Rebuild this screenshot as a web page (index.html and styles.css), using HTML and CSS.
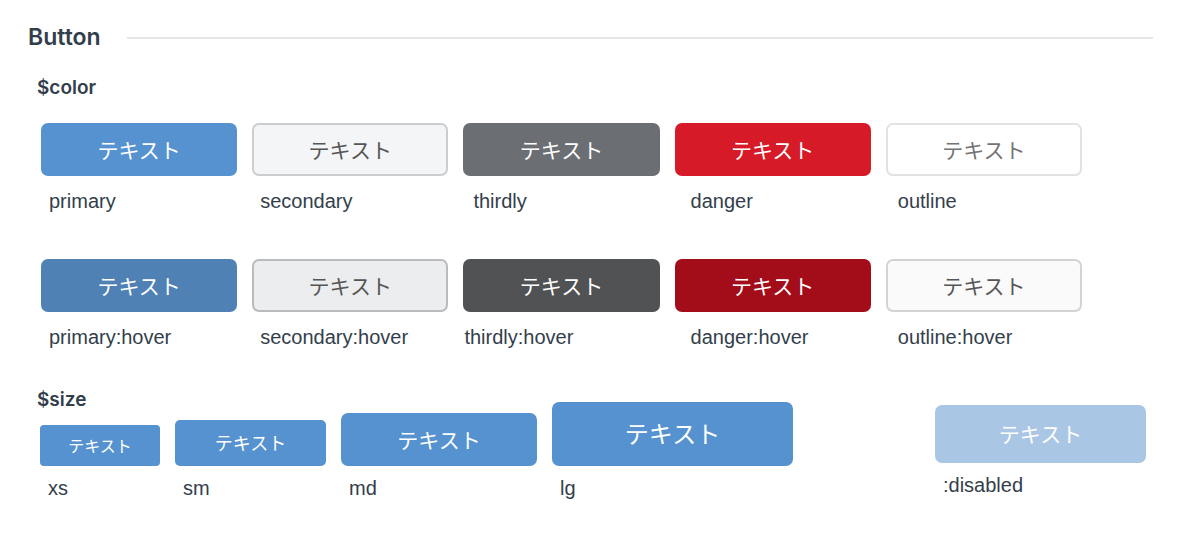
FILE: index.html
```html
<!DOCTYPE html>
<html lang="ja">
<head>
<meta charset="utf-8">
<meta name="viewport" content="width=device-width, initial-scale=1">
<title>Button</title>
<link rel="stylesheet" href="styles.css">
</head>
<body>
<main class="page">
  <header class="title-bar"><h1 class="title">Button</h1><hr class="rule"></header>
  <section class="colors">
    <h2 class="subtitle">$color</h2>
    <div class="grid">
      <div class="item"><button type="button" class="btn primary" aria-describedby="c1">テキスト</button><span class="label" id="c1">primary</span></div>
      <div class="item"><button type="button" class="btn secondary" aria-describedby="c2">テキスト</button><span class="label" id="c2">secondary</span></div>
      <div class="item"><button type="button" class="btn thirdly" aria-describedby="c3">テキスト</button><span class="label label-thirdly" id="c3">thirdly</span></div>
      <div class="item"><button type="button" class="btn danger" aria-describedby="c4">テキスト</button><span class="label label-wide" id="c4">danger</span></div>
      <div class="item"><button type="button" class="btn outline" aria-describedby="c5">テキスト</button><span class="label label-outline" id="c5">outline</span></div>
      <div class="item"><button type="button" class="btn primary-hover" aria-describedby="h1">テキスト</button><span class="label" id="h1">primary:hover</span></div>
      <div class="item"><button type="button" class="btn secondary-hover" aria-describedby="h2">テキスト</button><span class="label" id="h2">secondary:hover</span></div>
      <div class="item"><button type="button" class="btn thirdly-hover" aria-describedby="h3">テキスト</button><span class="label label-tight" id="h3">thirdly:hover</span></div>
      <div class="item"><button type="button" class="btn danger-hover" aria-describedby="h4">テキスト</button><span class="label label-wide" id="h4">danger:hover</span></div>
      <div class="item"><button type="button" class="btn outline-hover" aria-describedby="h5">テキスト</button><span class="label label-outline" id="h5">outline:hover</span></div>
    </div>
  </section>
  <section class="sizes">
    <h2 class="subtitle">$size</h2>
    <div class="size-row">
      <div class="size-group">
        <div class="item"><button type="button" class="btn primary xs" aria-describedby="s1">テキスト</button><span class="label" id="s1">xs</span></div>
        <div class="item"><button type="button" class="btn primary sm" aria-describedby="s2">テキスト</button><span class="label" id="s2">sm</span></div>
        <div class="item"><button type="button" class="btn primary md" aria-describedby="s3">テキスト</button><span class="label" id="s3">md</span></div>
        <div class="item"><button type="button" class="btn primary lg" aria-describedby="s4">テキスト</button><span class="label" id="s4">lg</span></div>
      </div>
      <div class="item"><button type="button" class="btn disabled" aria-describedby="s5" disabled>テキスト</button><span class="label" id="s5">:disabled</span></div>
    </div>
  </section>
</main>
</body>
</html>
```
FILE: styles.css
```css
* {
  box-sizing: border-box;
}

body {
  margin: 0;
  background: #fff;
  color: #333e4c;
  font-family: "Liberation Sans", "Noto Sans CJK JP", sans-serif;
}

.page {
  padding: 21px 47px 32px 28px;
}

.title-bar {
  display: flex;
  align-items: center;
  gap: 26px;
}

.title {
  margin: 0;
  font-family: Inter, sans-serif;
  font-size: 23px;
  line-height: 32px;
  font-weight: 600;
}

.rule {
  flex: 1;
  margin: 2px 0 0;
  border: 0;
  border-top: 2px solid #e6e6e6;
}

.colors {
  padding: 23px 65px 0 12px;
}

.subtitle {
  margin: 0 0 0 -3px;
  font-family: Inter, sans-serif;
  font-size: 19px;
  line-height: 24px;
  font-weight: 600;
}

.grid {
  display: grid;
  grid-template-columns: repeat(5, 1fr);
  gap: 44px 15px;
  padding: 23px 6px 0 1px;
}

.item {
  display: flex;
  flex-direction: column;
  gap: 11px;
}

.label {
  padding-left: 8px;
  font-size: 20px;
  line-height: 28px;
}

.label-tight {
  padding-left: 1px;
}

.label-thirdly {
  padding-left: 10px;
}

.label-outline {
  padding-left: 12px;
}

.label-wide {
  padding-left: 16px;
}

.btn {
  width: 100%;
  height: 53px;
  padding: 0 0 2px;
  border: 0 solid transparent;
  border-radius: 7px;
  color: #fff;
  font-family: "Noto Sans CJK JP", sans-serif;
  font-size: 21px;
  line-height: 28px;
}

.primary { background-color: #5592cf; }
.primary-hover { background-color: #4f81b5; }
.secondary { background-color: #f3f5f7; border: 2px solid #cbcdcf; color: #555; }
.secondary-hover { background-color: #ebedef; border: 2px solid #b9bbbd; color: #555; }
.thirdly { background-color: #6b6e72; }
.thirdly-hover { background-color: #505254; }
.danger { background-color: #d61a28; }
.danger-hover { background-color: #a30d1a; }
.outline { background-color: #fff; border: 2px solid #e2e2e2; color: #737373; }
.outline-hover { background-color: #fafafa; border: 2px solid #d3d3d3; color: #555; }

.sizes {
  padding: 37px 7px 0 12px;
}

/* The tallest button rises beside the heading. */
.size-row {
  display: flex;
  justify-content: space-between;
  align-items: center;
  margin-top: -10px;
}

.size-group {
  display: flex;
  align-items: flex-end;
  gap: 15px;
}

.size-row .item {
  gap: 8px;
}

.xs { width: 120px; height: 41px; border-radius: 4px; font-size: 16px; }
.sm { width: 151px; height: 46px; border-radius: 5px; font-size: 18px; }
.md { width: 196px; }
.lg { width: 241px; height: 64px; font-size: 24px; }
.disabled { width: 211px; height: 58px; background-color: #a9c6e5; }
```
